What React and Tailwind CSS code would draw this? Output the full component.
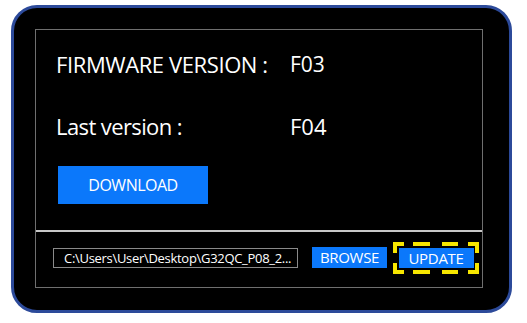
import React from "react";

//HIGHLIGHT FRAME (yellow dashes round the update button)
function DashFrame() {
  return (
    <svg
      className="absolute inset-0 pointer-events-none"
      width="86"
      height="32"
      viewBox="0 0 86 32"
    >
      <g stroke="#f7e600" strokeWidth="4" fill="none" strokeLinecap="butt">
        <path d="M2 11 V2 H11" />
        <path d="M75 2 H84 V11" />
        <path d="M2 21 V30 H11" />
        <path d="M75 30 H84 V21" />
        <path d="M20 2 H37 M49 2 H65" />
        <path d="M20 30 H37 M49 30 H65" />
      </g>
    </svg>
  );
}

export default function App() {
  const font = { fontFamily: '"Open Sans", "Noto Sans", sans-serif' };

  return (
    <div className="w-[527px] h-[323px] bg-white pt-[5px] pl-[11px]" style={font}>
      <div className="w-[501px] h-[308px] bg-black border-[3px] border-[#2c4a9a] rounded-[26px] pt-[21px] pl-[21px]">
        <div className="w-[448px] h-[259px] border border-[#6f6f6f] flex flex-col">
          {/* top section */}
          <div className="h-[200px] pl-[20px] pt-[19px] text-white">
            <div className="flex items-center h-[30px]">
              <span className="w-[234px] text-[22px] tracking-[-0.4px]">FIRMWARE VERSION :</span>
              <span className="text-[21px] mt-[2px]">F03</span>
            </div>
            <div className="flex items-center h-[30px] mt-[32px]">
              <span className="w-[234px] text-[22px] tracking-[-0.6px]">Last version :</span>
              <span className="text-[22px]">F04</span>
            </div>
            <button className="mt-[25px] ml-[2px] w-[150px] h-[38px] bg-[#0b78fb] text-white text-[16px] tracking-[-0.5px] flex items-center justify-center">
              DOWNLOAD
            </button>
          </div>

          <div className="h-[2px] bg-[#c8c8c8]" />

          {/* bottom section */}
          <div className="flex-1 flex items-center pl-[17px] pb-[4px]">
            <div className="w-[245px] h-[20px] border border-[#8a8a8a] text-white text-[13px] leading-[18px] pl-[10px] whitespace-nowrap overflow-hidden tracking-[-0.3px]">
              C:\Users\User\Desktop\G32QC_P08_2...
            </div>
            <button className="ml-[14px] w-[75px] h-[21px] bg-[#0b78fb] text-white text-[15px] leading-[21px] tracking-[-0.3px]">
              BROWSE
            </button>
            <div className="relative ml-[6px] w-[86px] h-[32px] flex items-center justify-center">
              <button className="w-[75px] h-[20px] bg-[#0b78fb] text-white text-[15px] leading-[20px] tracking-[-0.3px]">
                UPDATE
              </button>
              <DashFrame />
            </div>
          </div>
        </div>
      </div>
    </div>
  );
}
